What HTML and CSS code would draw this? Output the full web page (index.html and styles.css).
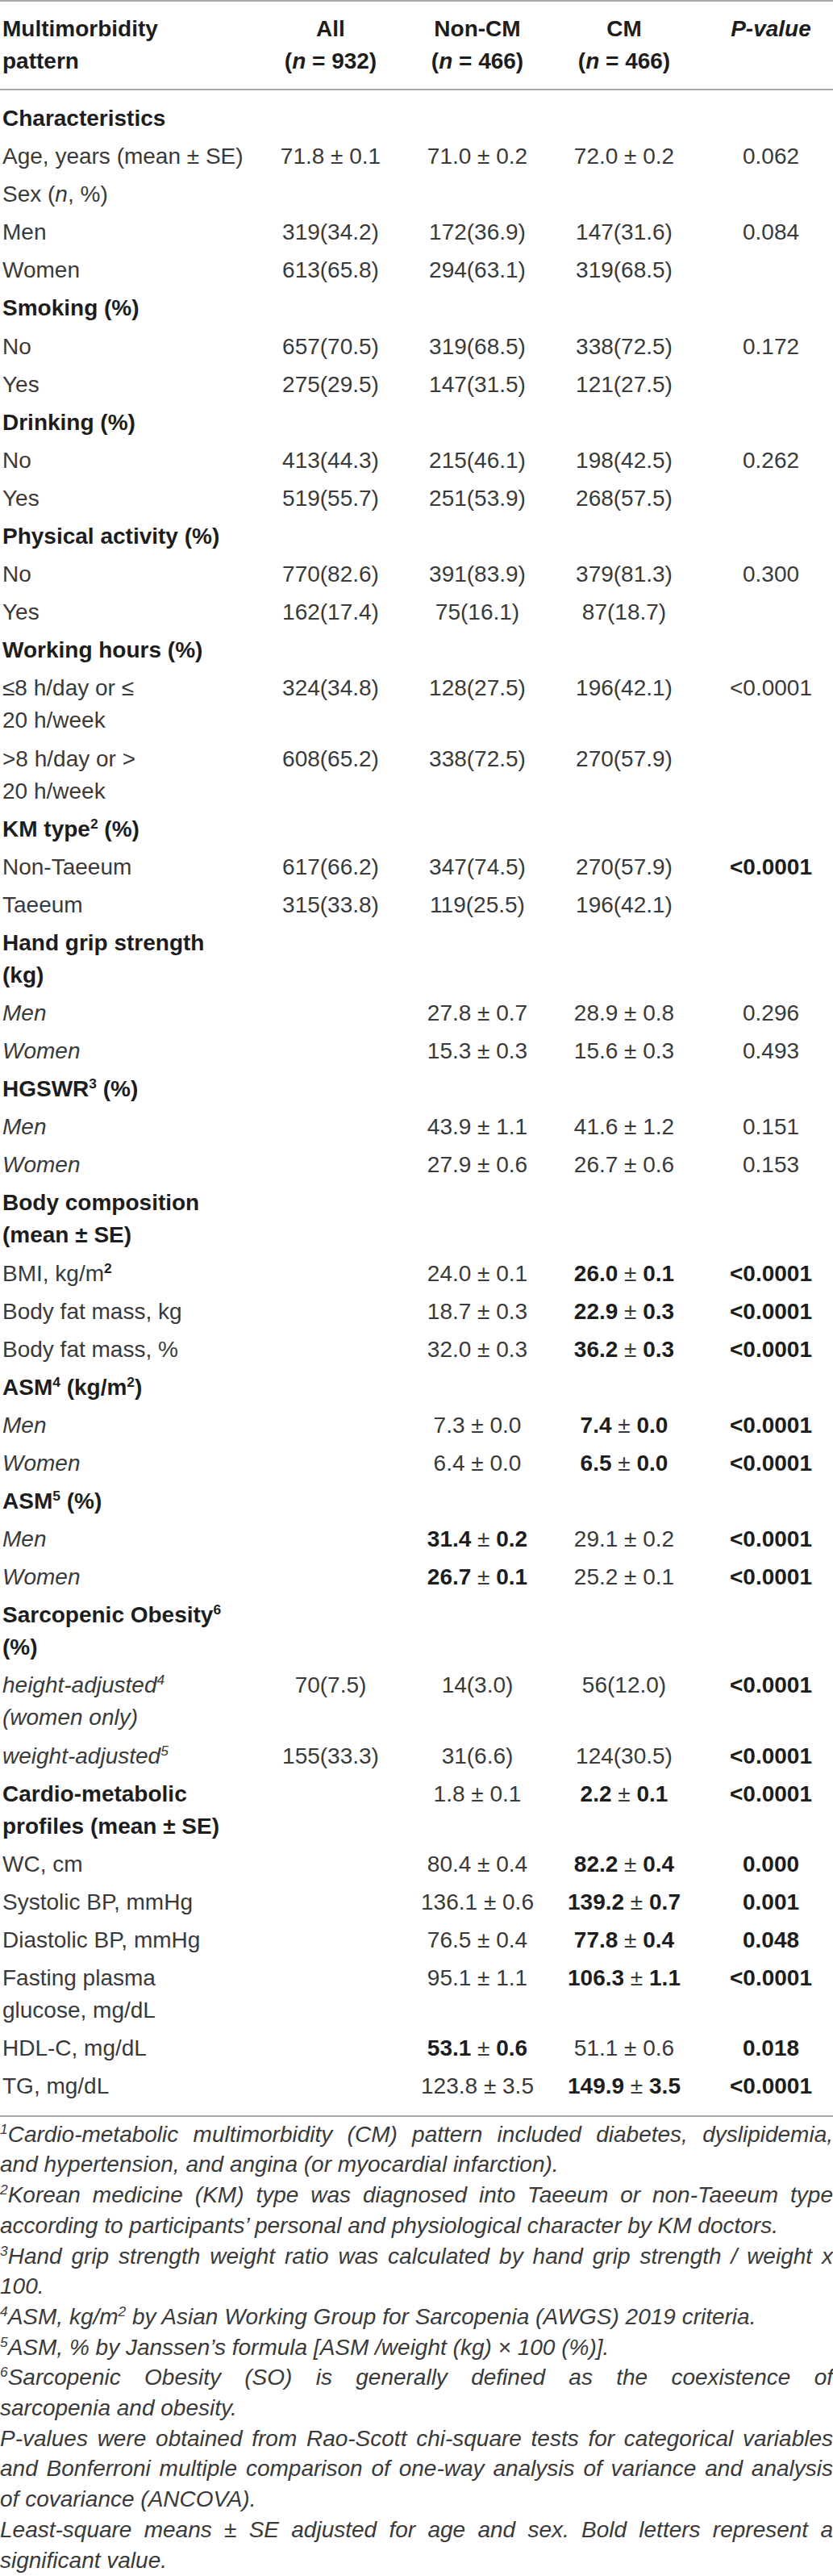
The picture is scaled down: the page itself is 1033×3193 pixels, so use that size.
FILE: index.html
```html
<!DOCTYPE html>
<html lang="en">
<head>
    <meta charset="UTF-8">
    <meta name="viewport" content="width=device-width, initial-scale=1.0">
    <title>Multimorbidity pattern</title>
    <link rel="stylesheet" href="styles.css">
</head>
<body>
    <div class="table-box">
        <table class="stats">
            <colgroup>
                <col class="c-label">
                <col class="c-num">
                <col class="c-num">
                <col class="c-num">
                <col class="c-p">
            </colgroup>
            <thead>
                <tr>
                    <th>Multimorbidity<br>pattern</th>
                    <th>All<br>(<i>n</i> = 932)</th>
                    <th>Non-CM<br>(<i>n</i> = 466)</th>
                    <th>CM<br>(<i>n</i> = 466)</th>
                    <th><i>P-value</i></th>
                </tr>
            </thead>
            <tbody>
                <tr class="sec"><td>Characteristics</td><td></td><td></td><td></td><td></td></tr>
                <tr><td>Age, years (mean ± SE)</td><td>71.8 ± 0.1</td><td>71.0 ± 0.2</td><td>72.0 ± 0.2</td><td>0.062</td></tr>
                <tr><td>Sex (<i>n</i>, %)</td><td></td><td></td><td></td><td></td></tr>
                <tr><td>Men</td><td>319(34.2)</td><td>172(36.9)</td><td>147(31.6)</td><td>0.084</td></tr>
                <tr><td>Women</td><td>613(65.8)</td><td>294(63.1)</td><td>319(68.5)</td><td></td></tr>

                <tr class="sec"><td>Smoking (%)</td><td></td><td></td><td></td><td></td></tr>
                <tr><td>No</td><td>657(70.5)</td><td>319(68.5)</td><td>338(72.5)</td><td>0.172</td></tr>
                <tr><td>Yes</td><td>275(29.5)</td><td>147(31.5)</td><td>121(27.5)</td><td></td></tr>

                <tr class="sec"><td>Drinking (%)</td><td></td><td></td><td></td><td></td></tr>
                <tr><td>No</td><td>413(44.3)</td><td>215(46.1)</td><td>198(42.5)</td><td>0.262</td></tr>
                <tr><td>Yes</td><td>519(55.7)</td><td>251(53.9)</td><td>268(57.5)</td><td></td></tr>

                <tr class="sec"><td>Physical activity (%)</td><td></td><td></td><td></td><td></td></tr>
                <tr><td>No</td><td>770(82.6)</td><td>391(83.9)</td><td>379(81.3)</td><td>0.300</td></tr>
                <tr><td>Yes</td><td>162(17.4)</td><td>75(16.1)</td><td>87(18.7)</td><td></td></tr>

                <tr class="sec"><td>Working hours (%)</td><td></td><td></td><td></td><td></td></tr>
                <tr><td>≤8 h/day or ≤<br>20 h/week</td><td>324(34.8)</td><td>128(27.5)</td><td>196(42.1)</td><td>&lt;0.0001</td></tr>
                <tr><td>&gt;8 h/day or &gt;<br>20 h/week</td><td>608(65.2)</td><td>338(72.5)</td><td>270(57.9)</td><td></td></tr>

                <tr class="sec"><td>KM type<sup>2</sup> (%)</td><td></td><td></td><td></td><td></td></tr>
                <tr><td>Non-Taeeum</td><td>617(66.2)</td><td>347(74.5)</td><td>270(57.9)</td><td><b>&lt;0.0001</b></td></tr>
                <tr><td>Taeeum</td><td>315(33.8)</td><td>119(25.5)</td><td>196(42.1)</td><td></td></tr>

                <tr class="sec"><td>Hand grip strength<br>(kg)</td><td></td><td></td><td></td><td></td></tr>
                <tr><td><i>Men</i></td><td></td><td>27.8 ± 0.7</td><td>28.9 ± 0.8</td><td>0.296</td></tr>
                <tr><td><i>Women</i></td><td></td><td>15.3 ± 0.3</td><td>15.6 ± 0.3</td><td>0.493</td></tr>

                <tr class="sec"><td>HGSWR<sup>3</sup> (%)</td><td></td><td></td><td></td><td></td></tr>
                <tr><td><i>Men</i></td><td></td><td>43.9 ± 1.1</td><td>41.6 ± 1.2</td><td>0.151</td></tr>
                <tr><td><i>Women</i></td><td></td><td>27.9 ± 0.6</td><td>26.7 ± 0.6</td><td>0.153</td></tr>

                <tr class="sec"><td>Body composition<br>(mean ± SE)</td><td></td><td></td><td></td><td></td></tr>
                <tr><td>BMI, kg/m<sup><b>2</b></sup></td><td></td><td>24.0 ± 0.1</td><td><b>26.0</b> ± <b>0.1</b></td><td><b>&lt;0.0001</b></td></tr>
                <tr><td>Body fat mass, kg</td><td></td><td>18.7 ± 0.3</td><td><b>22.9</b> ± <b>0.3</b></td><td><b>&lt;0.0001</b></td></tr>
                <tr><td>Body fat mass, %</td><td></td><td>32.0 ± 0.3</td><td><b>36.2</b> ± <b>0.3</b></td><td><b>&lt;0.0001</b></td></tr>

                <tr class="sec"><td>ASM<sup>4</sup> (kg/m<sup>2</sup>)</td><td></td><td></td><td></td><td></td></tr>
                <tr><td><i>Men</i></td><td></td><td>7.3 ± 0.0</td><td><b>7.4</b> ± <b>0.0</b></td><td><b>&lt;0.0001</b></td></tr>
                <tr><td><i>Women</i></td><td></td><td>6.4 ± 0.0</td><td><b>6.5</b> ± <b>0.0</b></td><td><b>&lt;0.0001</b></td></tr>

                <tr class="sec"><td>ASM<sup>5</sup> (%)</td><td></td><td></td><td></td><td></td></tr>
                <tr><td><i>Men</i></td><td></td><td><b>31.4</b> ± <b>0.2</b></td><td>29.1 ± 0.2</td><td><b>&lt;0.0001</b></td></tr>
                <tr><td><i>Women</i></td><td></td><td><b>26.7</b> ± <b>0.1</b></td><td>25.2 ± 0.1</td><td><b>&lt;0.0001</b></td></tr>

                <tr class="sec"><td>Sarcopenic Obesity<sup>6</sup><br>(%)</td><td></td><td></td><td></td><td></td></tr>
                <tr><td><i>height-adjusted<sup>4</sup><br>(women only)</i></td><td>70(7.5)</td><td>14(3.0)</td><td>56(12.0)</td><td><b>&lt;0.0001</b></td></tr>
                <tr><td><i>weight-adjusted<sup>5</sup></i></td><td>155(33.3)</td><td>31(6.6)</td><td>124(30.5)</td><td><b>&lt;0.0001</b></td></tr>

                <tr class="sec"><td>Cardio-metabolic<br>profiles (mean ± SE)</td><td></td><td>1.8 ± 0.1</td><td><b>2.2</b> ± <b>0.1</b></td><td><b>&lt;0.0001</b></td></tr>
                <tr><td>WC, cm</td><td></td><td>80.4 ± 0.4</td><td><b>82.2</b> ± <b>0.4</b></td><td><b>0.000</b></td></tr>
                <tr><td>Systolic BP, mmHg</td><td></td><td>136.1 ± 0.6</td><td><b>139.2</b> ± <b>0.7</b></td><td><b>0.001</b></td></tr>
                <tr><td>Diastolic BP, mmHg</td><td></td><td>76.5 ± 0.4</td><td><b>77.8</b> ± <b>0.4</b></td><td><b>0.048</b></td></tr>
                <tr><td>Fasting plasma<br>glucose, mg/dL</td><td></td><td>95.1 ± 1.1</td><td><b>106.3</b> ± <b>1.1</b></td><td><b>&lt;0.0001</b></td></tr>
                <tr><td>HDL-C, mg/dL</td><td></td><td><b>53.1</b> ± <b>0.6</b></td><td>51.1 ± 0.6</td><td><b>0.018</b></td></tr>
                <tr><td>TG, mg/dL</td><td></td><td>123.8 ± 3.5</td><td><b>149.9</b> ± <b>3.5</b></td><td><b>&lt;0.0001</b></td></tr>
            </tbody>
        </table>

        <div class="notes">
            <p><span class="ln"><sup>1</sup>Cardio-metabolic multimorbidity (CM) pattern included diabetes, dyslipidemia,</span>and hypertension, and angina (or myocardial infarction).</p>
            <p><span class="ln"><sup>2</sup>Korean medicine (KM) type was diagnosed into Taeeum or non-Taeeum type</span>according to participants’ personal and physiological character by KM doctors.</p>
            <p><span class="ln"><sup>3</sup>Hand grip strength weight ratio was calculated by hand grip strength / weight x</span>100.</p>
            <p><sup>4</sup>ASM, kg/m<sup>2</sup> by Asian Working Group for Sarcopenia (AWGS) 2019 criteria.</p>
            <p><sup>5</sup>ASM, % by Janssen’s formula [ASM /weight (kg) × 100 (%)].</p>
            <p><span class="ln"><sup>6</sup>Sarcopenic Obesity (SO) is generally defined as the coexistence of</span>sarcopenia and obesity.</p>
            <p><span class="ln">P-values were obtained from Rao-Scott chi-square tests for categorical variables</span><span class="ln">and Bonferroni multiple comparison of one-way analysis of variance and analysis</span>of covariance (ANCOVA).</p>
            <p><span class="ln">Least-square means ± SE adjusted for age and sex. Bold letters represent a</span>significant value.</p>
        </div>
    </div>
</body>
</html>
```

FILE: styles.css
```css
* {
    margin: 0;
    padding: 0;
    box-sizing: border-box;
}

body {
    font-family: 'Liberation Sans', Arial, sans-serif;
    font-size: 28px;
    color: #3a3a3a;
    background-color: #fff;
}

.table-box {
    width: 1033px;
}

/* Tabela */
.stats {
    width: 100%;
    table-layout: fixed;
    border-collapse: separate;
    border-spacing: 0;
}

.c-label {
    width: 319px;
}

.c-num {
    width: 182px;
}

.c-p {
    width: 168px;
}

th, td {
    line-height: 40px;
    padding: 3.55px 0;
    text-align: center;
    vertical-align: top;
    font-weight: normal;
    white-space: nowrap;
}

th:first-child, td:first-child {
    text-align: left;
    padding-left: 3px;
}

th:last-child, td:last-child {
    padding-left: 14px;
}

thead th {
    font-weight: bold;
    color: #1d1d1d;
    padding-top: 14px;
    padding-bottom: 14px;
    border-top: 2px solid #a9a9a9;
    border-bottom: 2px solid #a9a9a9;
}

tbody tr:first-child td {
    padding-top: 15px;
}

tbody tr:last-child td {
    padding-bottom: 15.5px;
    border-bottom: 2px solid #a9a9a9;
}

.sec td:first-child {
    font-weight: bold;
    color: #1d1d1d;
}

b {
    color: #1d1d1d;
}

sup {
    font-size: 0.62em;
    line-height: 0;
    vertical-align: 0.6em;
}

/* Notas de rodape */
.notes {
    margin-top: 3px;
    font-style: italic;
    line-height: 37.7px;
    text-align: justify;
}

.notes .ln {
    display: block;
    text-align-last: justify;
}
```
